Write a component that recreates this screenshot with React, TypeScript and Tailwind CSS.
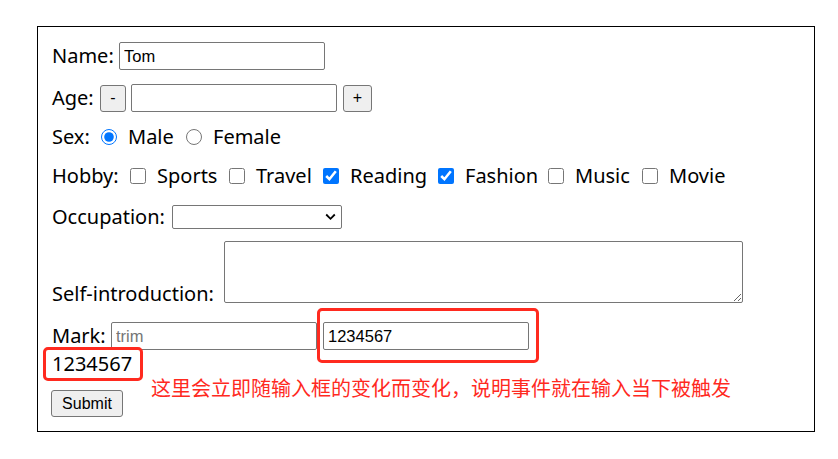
import React from "react";

const font = { fontFamily: '"Noto Sans", "Noto Sans CJK SC", sans-serif' };
const arial = { fontFamily: '"Liberation Sans", Arial, sans-serif' };

function Check({ checked, label, w }: { checked?: boolean; label: string; w: string }) {
  return (
    <label className="flex items-center">
      <input type="checkbox" defaultChecked={checked} className="w-4 h-4 m-0 shrink-0 accent-[#0075ff]" />
      <span className={"ml-[11px] shrink-0 " + w}>{label}</span>
    </label>
  );
}

export default function App() {
  const inputCls =
    "h-[28px] w-[206px] border border-[#767676] rounded-[2px] bg-white px-[4px] text-[16.5px] text-black outline-none shrink-0";
  const btnCls =
    "h-[27px] border border-[#767676] rounded-[3px] bg-[#efefef] text-[16px] text-black flex items-center justify-center shrink-0";
  return (
    <div className="w-[838px] h-[459px] bg-white pt-[26px] pl-[37px] text-black" style={font}>
      <div className="relative w-[778px] h-[406px] border border-black pl-[14px] pt-[15px] text-[20px]">
        {/* Name */}
        <div className="flex items-center h-[28px]">
          <span className="w-[67px] shrink-0">Name:</span>
          <input className={inputCls} defaultValue="Tom" style={arial} />
        </div>
        {/* Age */}
        <div className="flex items-center h-[28px] mt-[14px]">
          <span className="w-[48px] shrink-0">Age:</span>
          <button className={btnCls + " w-[26px]"} style={arial}>-</button>
          <input className={inputCls + " ml-[5px]"} />
          <button className={btnCls + " w-[29px] ml-[6px]"} style={arial}>+</button>
        </div>
        {/* Sex */}
        <div className="flex items-center h-[28px] mt-[11px]">
          <span className="w-[49px] shrink-0">Sex:</span>
          <input type="radio" name="sex" defaultChecked className="w-4 h-4 m-0 shrink-0 accent-[#0075ff]" />
          <span className="ml-[11px] w-[47px] shrink-0">Male</span>
          <input type="radio" name="sex" className="w-4 h-4 m-0 ml-[11px] shrink-0" />
          <span className="ml-[11px]">Female</span>
        </div>
        {/* Hobby */}
        <div className="flex items-center h-[28px] mt-[11px] gap-[10px]">
          <span className="w-[68px] shrink-0">Hobby:</span>
          <Check label="Sports" w="w-[62px]" />
          <Check label="Travel" w="w-[57px]" />
          <Check label="Reading" w="w-[78px]" checked />
          <Check label="Fashion" w="w-[73px]" checked />
          <Check label="Music" w="w-[57px]" />
          <Check label="Movie" w="w-[60px]" />
        </div>
        {/* Occupation */}
        <div className="flex items-center h-[28px] mt-[13px]">
          <span className="w-[120px] shrink-0">Occupation:</span>
          <div className="relative w-[170px] h-[24px] shrink-0">
            <select className="appearance-none w-full h-full border border-[#767676] rounded-[2px] bg-white"></select>
            <svg className="absolute right-[6px] top-[8px] pointer-events-none" width="11" height="8" viewBox="0 0 11 8">
              <path d="M1.2 1.5 L5.5 5.8 L9.8 1.5" fill="none" stroke="#000" strokeWidth="1.8" />
            </svg>
          </div>
        </div>
        {/* Self-introduction */}
        <div className="flex items-end h-[62px] mt-[10px]">
          <span className="leading-[24px] mb-[-3px] w-[172px] shrink-0">Self-introduction:</span>
          <textarea className="w-[519px] h-[62px] border border-[#767676] rounded-[2px] bg-white shrink-0" />
        </div>
        {/* Mark */}
        <div className="flex items-center h-[28px] mt-[19px]">
          <span className="w-[59px] shrink-0">Mark:</span>
          <input className={inputCls + " placeholder:text-[#757575]"} placeholder="trim" style={arial} />
          <input className={inputCls + " ml-[6px]"} defaultValue="1234567" style={arial} />
        </div>
        {/* Output */}
        <div className="h-[24px] leading-[24px] mt-[2px]">1234567</div>
        {/* Submit */}
        <div className="mt-[14px] ml-[-1px]">
          <button className={btnCls + " w-[72px] text-[16.5px]"} style={arial}>Submit</button>
        </div>

        {/* annotations */}
        <div className="absolute left-[279px] top-[281px] w-[222px] h-[55px] border-[3px] border-[#ff2a1f] rounded-[5px] pointer-events-none" />
        <div className="absolute left-[5px] top-[320px] w-[100px] h-[34px] border-[3px] border-[#ff2a1f] rounded-[5px] pointer-events-none" />
        <div
          className="absolute left-[113px] top-[349px] text-[20px] leading-[24px] text-[#ff2a1f] whitespace-nowrap"
          style={{ fontFamily: '"Noto Sans CJK SC", sans-serif' }}
        >
          这里会立即随输入框的变化而变化，说明事件就在输入当下被触发
        </div>
      </div>
    </div>
  );
}
